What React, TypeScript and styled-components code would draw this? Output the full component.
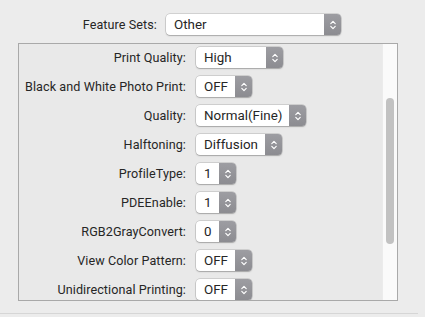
import React from 'react';
import styled, { createGlobalStyle } from 'styled-components';

const GlobalStyle = createGlobalStyle`
  html, body {
    margin: 0;
    padding: 0;
    background: #ececec;
  }
  body {
    font-family: Roboto, "Liberation Sans", Arial, sans-serif;
    font-size: 13px;
    color: #262626;
    -webkit-font-smoothing: antialiased;
  }
`;

const Page = styled.div`
  width: 425px;
  height: 317px;
  overflow: hidden;
  display: flex;
  flex-direction: column;
  padding-top: 14px;
  box-sizing: border-box;
`;

const TopRow = styled.div`
  display: grid;
  grid-template-columns: 157px auto;
  column-gap: 9px;
  align-items: center;
`;

const Label = styled.span`
  justify-self: end;
  white-space: nowrap;
  font-size: 12.6px;
  letter-spacing: 0.08px;
  color: #262626;
  margin-top: -1px;
`;

const Panel = styled.div`
  margin: 8px 0 0 18px;
  width: 380px;
  height: 258px;
  box-sizing: border-box;
  border: 1px solid #a9a9a9;
  background: #e9e9e9;
  display: flex;
  overflow: hidden;
`;

const Rows = styled.div`
  flex: 1;
  display: grid;
  grid-template-columns: 167px auto;
  column-gap: 10px;
  row-gap: 8px;
  align-content: start;
  justify-items: start;
  align-items: center;
  padding-top: 3px;
`;

const Track = styled.div`
  width: 14px;
  background: #fafafa;
  border-left: 1px solid #ebebeb;
  display: flex;
  flex-direction: column;
  align-items: center;
  padding-top: 54px;
`;

const Thumb = styled.div`
  width: 8px;
  height: 146px;
  border-radius: 4px;
  background: #c2c2c2;
`;

const Popup = styled.div<{ $width: number }>`
  width: ${({ $width }) => $width}px;
  height: 21px;
  box-sizing: border-box;
  display: flex;
  align-items: stretch;
  border-radius: 4px;
  background: #ffffff;
  box-shadow: 0 0 0 0.5px rgba(0, 0, 0, 0.22), 0 1px 1.5px rgba(0, 0, 0, 0.2);
  overflow: hidden;
`;

const PopupText = styled.span`
  flex: 1;
  display: flex;
  align-items: center;
  padding-left: 8px;
  font-size: 13.4px;
  color: #262626;
  white-space: nowrap;
`;

const Stepper = styled.span`
  width: 17px;
  display: flex;
  align-items: center;
  justify-content: center;
  background: linear-gradient(#9d9da2, #8c8c91);
`;

const Chevrons = () => (
  <svg width="8" height="12" viewBox="0 0 8 12">
    <path d="M1.8 4.6 L4 2.4 L6.2 4.6 M1.8 7.4 L4 9.6 L6.2 7.4" fill="none" stroke="#fff" strokeWidth="1.2" strokeLinecap="round" strokeLinejoin="round" />
  </svg>
);

const Select = ({ value, width }: { value: string; width: number }) => (
  <Popup $width={width}>
    <PopupText>{value}</PopupText>
    <Stepper>
      <Chevrons />
    </Stepper>
  </Popup>
);

const BottomLine = styled.div`
  margin-top: 12px;
  width: 418px;
  height: 1px;
  background: #d6d6d6;
`;

const options = [
  { label: 'Print Quality:', value: 'High', width: 87 },
  { label: 'Black and White Photo Print:', value: 'OFF', width: 56 },
  { label: 'Quality:', value: 'Normal(Fine)', width: 110 },
  { label: 'Halftoning:', value: 'Diffusion', width: 86 },
  { label: 'ProfileType:', value: '1', width: 40 },
  { label: 'PDEEnable:', value: '1', width: 40 },
  { label: 'RGB2GrayConvert:', value: '0', width: 40 },
  { label: 'View Color Pattern:', value: 'OFF', width: 56 },
  { label: 'Unidirectional Printing:', value: 'OFF', width: 56 },
];

export default function App() {
  return (
    <>
      <GlobalStyle />
      <Page>
        <TopRow>
          <Label>Feature Sets:</Label>
          <Select value="Other" width={175} />
        </TopRow>
        <Panel>
          <Rows>
            {options.map((o) => (
              <React.Fragment key={o.label}>
                <Label>{o.label}</Label>
                <Select value={o.value} width={o.width} />
              </React.Fragment>
            ))}
          </Rows>
          <Track>
            <Thumb />
          </Track>
        </Panel>
        <BottomLine />
      </Page>
    </>
  );
}
